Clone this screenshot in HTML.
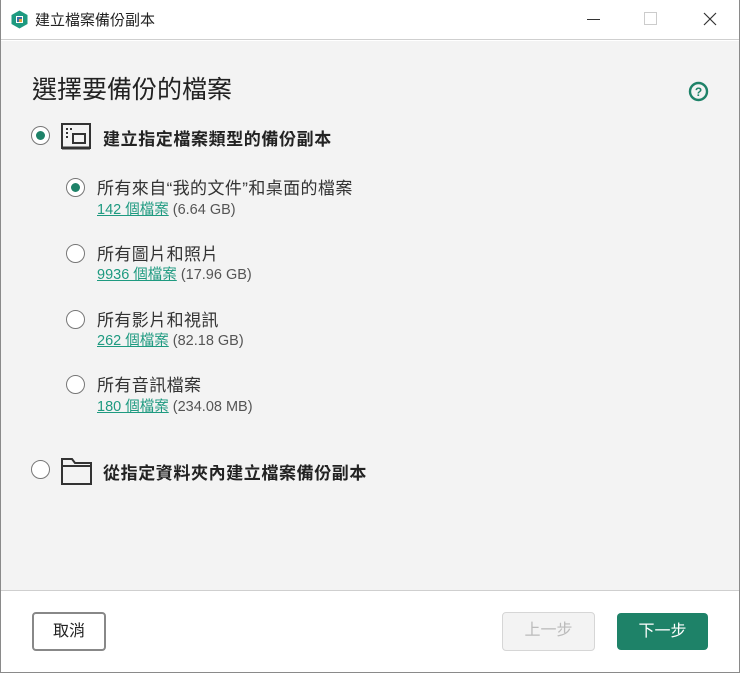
<!DOCTYPE html><html><head><meta charset="utf-8"><style>
*{margin:0;padding:0;box-sizing:border-box}
body{width:740px;height:673px;overflow:hidden;font-family:"Liberation Sans","Noto Sans CJK TC",sans-serif;background:#fff;position:relative;color:#222}
.abs{position:absolute}
.win{position:absolute;left:0;top:0;width:740px;height:673px;border:1px solid #8a8a8a;border-top:none}
.title{top:0;left:0;width:740px;height:40px;background:#fff;border-bottom:1px solid #cfcfcf}
.content{top:41px;left:1px;width:738px;height:550px;background:#f3f3f3;border-bottom:1px solid #cfcfcf}
.radio{position:absolute;width:19px;height:19px;border:1.5px solid #777;border-radius:50%;background:#fff}
.radio.on::after{content:"";position:absolute;left:3.5px;top:3.5px;width:9px;height:9px;border-radius:50%;background:#1e8268}
.opt{font-size:17px;color:#333;letter-spacing:0.4px;line-height:20px}
.sub{font-size:14.5px;color:#555;line-height:18px}
.sub a{color:#1e9a80;text-decoration:underline}
.big{font-size:17px;font-weight:bold;color:#222;letter-spacing:0.6px;line-height:20px}
.btn{position:absolute;border-radius:4px;font-size:16px;text-align:center}
</style></head><body>
<div class="abs title"></div>
<svg class="abs" style="left:11px;top:10px" width="17" height="19" viewBox="0 0 17 19"><path d="M8.5 0.5L16.5 5v9l-8 4.5L0.5 14V5z" fill="#1e9a80"/><rect x="5" y="6" width="7" height="7" fill="#fff"/><rect x="6" y="7" width="5" height="5" fill="#3a6ea5"/><rect x="8" y="9" width="3" height="3" fill="#e8a33a"/></svg>
<div class="abs" style="left:35px;top:9px;font-size:15px;color:#222">建立檔案備份副本</div>
<div class="abs" style="left:587px;top:19px;width:13px;height:1px;background:#333"></div>
<div class="abs" style="left:644px;top:12px;width:13px;height:13px;border:1px solid #ccc"></div>
<svg class="abs" style="left:703px;top:12px" width="14" height="14"><path d="M1 1L13 13M13 1L1 13" stroke="#333" stroke-width="1.2"/></svg>
<div class="abs content"></div>
<div class="abs" style="left:32px;top:75px;font-size:25px;line-height:30px;color:#222">選擇要備份的檔案</div>
<svg class="abs" style="left:688px;top:81px" width="21" height="21"><circle cx="10.5" cy="10.5" r="8.5" fill="none" stroke="#1e8268" stroke-width="2.4"/><text x="10.5" y="15" font-size="12" font-weight="bold" text-anchor="middle" fill="#1e8268" font-family="Liberation Sans">?</text></svg>
<div class="radio on" style="left:31px;top:126px"></div>
<svg class="abs" style="left:61px;top:123px" width="30" height="28"><rect x="1" y="1" width="28" height="24" fill="none" stroke="#333" stroke-width="2"/><line x1="1" y1="25" x2="29" y2="25" stroke="#333" stroke-width="3"/><rect x="12" y="11" width="12" height="9" fill="none" stroke="#333" stroke-width="2"/><rect x="5" y="5" width="2" height="2" fill="#333"/><rect x="9" y="5" width="2" height="2" fill="#333"/><rect x="5" y="9" width="2" height="2" fill="#333"/><rect x="5" y="13" width="2" height="2" fill="#333"/></svg>
<div class="abs big" style="left:103px;top:130px">建立指定檔案類型的備份副本</div>
<div class="radio on" style="left:66px;top:178px"></div>
<div class="abs opt" style="left:97px;top:179px">所有來自“我的文件”和桌面的檔案</div>
<div class="abs sub" style="left:97px;top:201px"><a>142 個檔案</a> (6.64 GB)</div>
<div class="radio" style="left:66px;top:244px"></div>
<div class="abs opt" style="left:97px;top:245px">所有圖片和照片</div>
<div class="abs sub" style="left:97px;top:266px"><a>9936 個檔案</a> (17.96 GB)</div>
<div class="radio" style="left:66px;top:310px"></div>
<div class="abs opt" style="left:97px;top:311px">所有影片和視訊</div>
<div class="abs sub" style="left:97px;top:332px"><a>262 個檔案</a> (82.18 GB)</div>
<div class="radio" style="left:66px;top:375px"></div>
<div class="abs opt" style="left:97px;top:376px">所有音訊檔案</div>
<div class="abs sub" style="left:97px;top:398px"><a>180 個檔案</a> (234.08 MB)</div>
<div class="radio" style="left:31px;top:460px"></div>
<svg class="abs" style="left:61px;top:457px" width="31" height="28"><path d="M1 2H11L14 6H30V27H1Z" fill="none" stroke="#333" stroke-width="2"/><line x1="1" y1="9" x2="30" y2="9" stroke="#333" stroke-width="2"/></svg>
<div class="abs big" style="left:103px;top:464px">從指定資料夾內建立檔案備份副本</div>
<div class="btn" style="left:32px;top:612px;width:74px;height:39px;border:2px solid #888;line-height:35px;color:#222;background:#fff">取消</div>
<div class="btn" style="left:502px;top:612px;width:93px;height:39px;border:1.5px solid #d6d6d6;line-height:36px;color:#bbb;background:#f3f3f3">上一步</div>
<div class="btn" style="left:617px;top:613px;width:91px;height:37px;background:#1e8268;line-height:37px;color:#fff">下一步</div>
<div class="win"></div>
</body></html>
